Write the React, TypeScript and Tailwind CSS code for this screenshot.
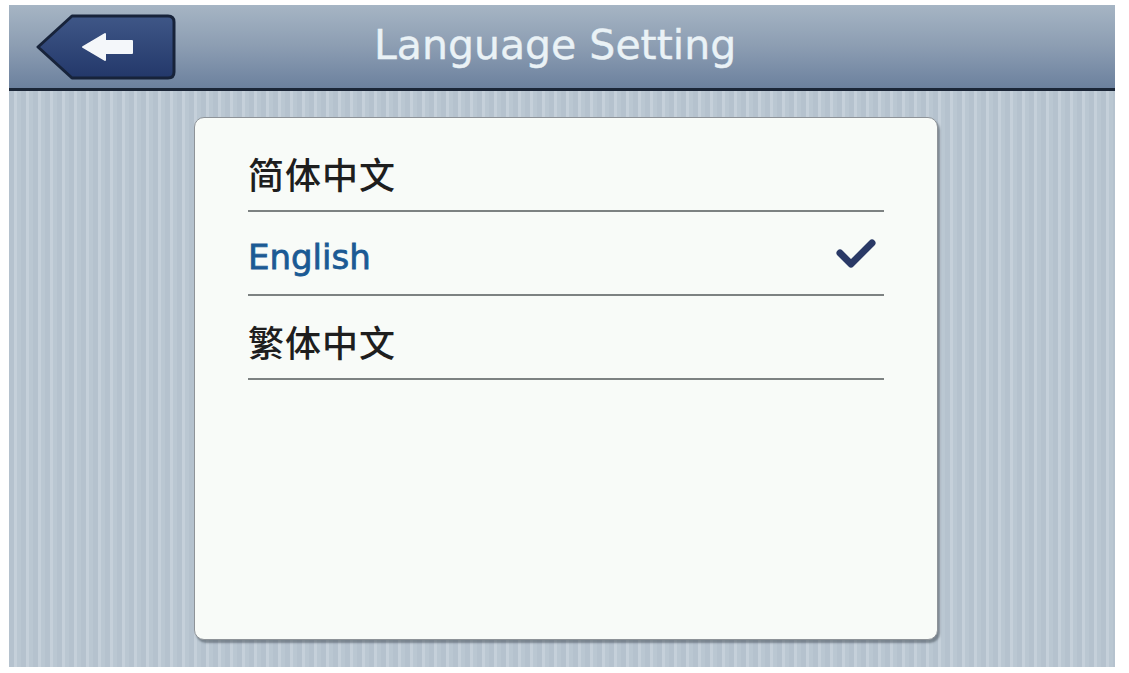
import { Fragment } from "react";

const languages = [
  { label: "简体中文", cjk: true, selected: false },
  { label: "English", cjk: false, selected: true },
  { label: "繁体中文", cjk: true, selected: false },
];

function BackButton() {
  return (
    <svg width="142" height="68" viewBox="0 0 142 68" className="shrink-0">
      <defs>
        <linearGradient id="backFill" x1="0" y1="0" x2="0" y2="1">
          <stop offset="0" stopColor="#3f5787" />
          <stop offset="1" stopColor="#23386a" />
        </linearGradient>
      </defs>
      <path
        d="M2 34 L36 3 L132 3 Q138 3 138 9 L138 59 Q138 65 132 65 L36 65 Z"
        fill="url(#backFill)"
        stroke="#17233a"
        strokeWidth="3"
        strokeLinejoin="round"
      />
      <path
        d="M47 34 L69 21 L69 28 L96 28 L96 40 L69 40 L69 47 Z"
        fill="#f4f7fa"
        stroke="#f4f7fa"
        strokeWidth="2"
        strokeLinejoin="round"
      />
    </svg>
  );
}

function Check() {
  return (
    <svg width="44" height="34" viewBox="0 0 44 34">
      <path
        d="M6 16 L17 27 L38 6"
        fill="none"
        stroke="#2a3966"
        strokeWidth="7"
        strokeLinecap="round"
        strokeLinejoin="round"
      />
    </svg>
  );
}

export default function App() {
  return (
    <div className="w-[1129px] h-[673px] bg-white pt-[5px] pl-[9px]">
      <div className="w-[1106px] h-[662px] flex flex-col">
        <div className="h-[86px] shrink-0 flex items-center bg-gradient-to-b from-[#a6b5c4] via-[#8c9db2] to-[#6c819e] border-b-[3px] border-[#1b2637]">
          <div className="ml-[27px] mt-[1px]">
            <BackButton />
          </div>
          <h1 className="ml-[196px] mb-[3px] text-[41px] leading-none text-[#eaf2f6] font-['DejaVu_Sans',sans-serif] [-webkit-text-stroke:0.4px_#eaf2f6]">
            Language Setting
          </h1>
        </div>

        <div className="flex-1 bg-[repeating-linear-gradient(90deg,#b5c2ce_0px,#b5c2ce_5px,#c5d0da_5px,#c5d0da_8px,#bac7d2_8px,#bac7d2_12px)] pt-[26px] pl-[185px]">
          <div className="w-[744px] h-[523px] bg-[#f8fbf8] rounded-[10px] border border-[#8e9398] shadow-[2px_3px_2px_rgba(70,80,90,0.55)] pt-[10px] px-[53px]">
            {languages.map((lang) => (
              <Fragment key={lang.label}>
                <div className="h-[84px] flex items-center justify-between pt-[8px] border-b-2 border-[#7d8282]">
                  {lang.cjk ? (
                    <span className="text-[36px] leading-none text-[#1e1e1e] font-medium font-['Noto_Sans_CJK_SC',sans-serif] tracking-[1px]">
                      {lang.label}
                    </span>
                  ) : (
                    <span className="text-[34px] leading-none text-[#1b5a94] font-['DejaVu_Sans',sans-serif] [-webkit-text-stroke:0.8px_#1b5a94]">
                      {lang.label}
                    </span>
                  )}
                  {lang.selected && (
                    <div className="mr-[6px] mt-[-6px]">
                      <Check />
                    </div>
                  )}
                </div>
              </Fragment>
            ))}
          </div>
        </div>
      </div>
    </div>
  );
}
